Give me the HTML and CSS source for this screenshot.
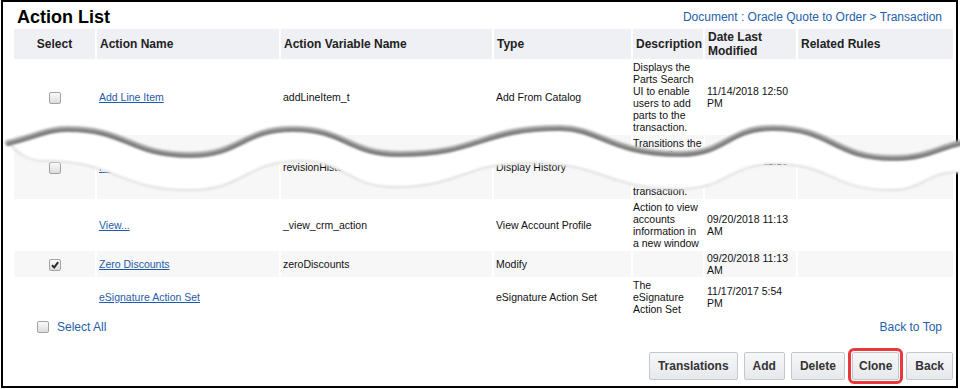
FILE: index.html
```html
<!DOCTYPE html>
<html lang="en">

<head>
    <meta charset="UTF-8">
    <meta name="viewport" content="width=device-width, initial-scale=1.0">
    <title>Action List</title>

    <link rel="stylesheet" href="styles.css">
</head>

<body>
    <div class="frame">
        <div class="titlebar">
            <h1>Action List</h1>
            <div class="crumbs">Document : Oracle Quote to Order &gt; Transaction</div>
        </div>

        <table class="action-table">
            <colgroup>
                <col class="c-sel">
                <col class="c-name">
                <col class="c-var">
                <col class="c-type">
                <col class="c-desc">
                <col class="c-date">
                <col class="c-rules">
            </colgroup>
            <thead>
                <tr>
                    <th class="sel">Select</th>
                    <th>Action Name</th>
                    <th>Action Variable Name</th>
                    <th>Type</th>
                    <th>Description</th>
                    <th>Date Last Modified</th>
                    <th>Related Rules</th>
                </tr>
            </thead>
            <tbody>
                <tr>
                    <td class="sel"><span class="chk"></span></td>
                    <td><a href="#">Add Line Item</a></td>
                    <td>addLineItem_t</td>
                    <td>Add From Catalog</td>
                    <td class="desc">Displays the Parts Search UI to enable users to add parts to the transaction.</td>
                    <td>11/14/2018 12:50 PM</td>
                    <td></td>
                </tr>
                <tr class="alt">
                    <td class="sel"><span class="chk"></span></td>
                    <td><a href="#">Revision History</a></td>
                    <td>revisionHistory_t</td>
                    <td>Display History</td>
                    <td class="desc">Transitions the transaction to the revision history transaction.</td>
                    <td>09/20/2018 11:13 AM</td>
                    <td></td>
                </tr>
                <tr>
                    <td class="sel"></td>
                    <td><a href="#">View...</a></td>
                    <td>_view_crm_action</td>
                    <td>View Account Profile</td>
                    <td class="desc">Action to view accounts information in a new window</td>
                    <td>09/20/2018 11:13 AM</td>
                    <td></td>
                </tr>
                <tr class="alt short">
                    <td class="sel">
                        <span class="chk">
                            <svg viewBox="0 0 10 10" width="10" height="10"><path d="M2 5.2 L4.2 7.4 L8.2 2.2" /></svg>
                        </span>
                    </td>
                    <td><a href="#">Zero Discounts</a></td>
                    <td>zeroDiscounts</td>
                    <td>Modify</td>
                    <td class="desc"></td>
                    <td>09/20/2018 11:13 AM</td>
                    <td></td>
                </tr>
                <tr>
                    <td class="sel"></td>
                    <td><a href="#">eSignature Action Set</a></td>
                    <td></td>
                    <td>eSignature Action Set</td>
                    <td class="desc">The eSignature Action Set</td>
                    <td>11/17/2017 5:54 PM</td>
                    <td></td>
                </tr>
            </tbody>
        </table>

        <div class="table-foot">
            <label class="select-all"><span class="chk"></span>Select All</label>
            <a class="top-link" href="#">Back to Top</a>
        </div>

        <div class="buttons">
            <button>Translations</button>
            <button>Add</button>
            <button>Delete</button>
            <button class="marked">Clone</button>
            <button>Back</button>
        </div>

        <!-- torn-page cut over the middle of the list -->
        <svg class="tear" viewBox="0 118 960 84" width="960" height="84">
            <defs>
                <filter id="soft" x="-5%" y="-60%" width="110%" height="220%">
                    <feGaussianBlur stdDeviation="1.1" />
                </filter>
            </defs>
            <path class="gap" d="M8,142 C37,135 47,128 67,128 C128,128 129,154 190,154 C241,154 242,128 293,128 C346,128 347,153 400,153 C480,153 480,127 560,127 C600,127 610,153 680,153 C727,153 727,127 773,127 C833,127 833,157 893,157 C926,157 935,148 960,142 L960,172 C925,172 925,190 890,190 C832,190 832,164 775,164 C728,164 728,189 680,189 C605,189 605,163 530,163 C462,163 462,187 395,187 C347,187 347,161 300,161 C245,161 245,190 190,190 C117,190 117,161 45,161 C25,161 15,150 8,142 Z" />
            <path class="edge-low" d="M8,142 C15,150 25,161 45,161 C117,161 117,190 190,190 C245,190 245,161 300,161 C347,161 347,187 395,187 C462,187 462,163 530,163 C605,163 605,189 680,189 C728,189 728,164 775,164 C832,164 832,190 890,190 C925,190 925,172 960,172" />
            <path class="edge-wide" d="M8,142 C37,135 47,128 67,128 C128,128 129,154 190,154 C241,154 242,128 293,128 C346,128 347,153 400,153 C480,153 480,127 560,127 C600,127 610,153 680,153 C727,153 727,127 773,127 C833,127 833,157 893,157 C926,157 935,148 960,142" />
            <path class="edge-core" d="M8,142 C37,135 47,128 67,128 C128,128 129,154 190,154 C241,154 242,128 293,128 C346,128 347,153 400,153 C480,153 480,127 560,127 C600,127 610,153 680,153 C727,153 727,127 773,127 C833,127 833,157 893,157 C926,157 935,148 960,142" />
        </svg>
    </div>
</body>

</html>
```

FILE: styles.css
```css
* {
    margin: 0;
    padding: 0;
    box-sizing: border-box;
}

body {
    background: #fff;
    font-family: "Liberation Sans", Arial, sans-serif;
    color: #111;
}

.frame {
    position: relative;
    width: 957px;
    height: 388px;
    margin-left: 1px;
    border: 2px solid #000;
    padding: 0 3px 0 11px;
}

.titlebar {
    display: flex;
    justify-content: space-between;
    align-items: flex-start;
    height: 27px;
}

.titlebar h1 {
    font-size: 18px;
    line-height: 22px;
    font-weight: bold;
    color: #000;
    padding: 4px 0 0 3px;
}

.crumbs {
    font-size: 12px;
    line-height: 14px;
    color: #2461ab;
    padding: 8px 11px 0 0;
}

/* list table */
.action-table {
    border-collapse: separate;
    border-spacing: 2px 0;
    table-layout: fixed;
    width: 943px;
    margin-left: -2px;
    font-size: 10.5px;
    line-height: 12px;
}

.c-sel { width: 81px; }
.c-name { width: 182px; }
.c-var { width: 211px; }
.c-type { width: 137px; }
.c-desc { width: 70px; }
.c-date { width: 91px; }
.c-rules { width: 155px; }

.action-table th {
    background: #eff0f4;
    color: #222;
    font-size: 12px;
    line-height: 14px;
    font-weight: bold;
    text-align: left;
    vertical-align: middle;
    padding: 1px 0 1px 3px;
    height: 30px;
}

.action-table th.sel {
    text-align: center;
    padding-left: 0;
}

.action-table td {
    padding: 2px 2px;
    vertical-align: middle;
    color: #111;
}

.action-table td.sel {
    text-align: center;
    padding: 0;
}

.action-table td.desc {
    padding-left: 0;
    padding-right: 0;
}

.action-table tr.alt td {
    background: #f7f7f7;
}

.action-table tr.short td {
    padding-top: 1px;
    padding-bottom: 1px;
}

.action-table a {
    color: #1f5ca8;
    text-decoration: underline;
}

/* fake checkboxes */
.chk {
    display: inline-block;
    width: 12px;
    height: 12px;
    border: 1px solid #a2a2a2;
    border-radius: 2px;
    background: linear-gradient(#fbfbfb, #dcdcdc);
    vertical-align: middle;
}

.chk svg {
    display: block;
}

.chk path {
    fill: none;
    stroke: #2b2b2b;
    stroke-width: 2;
}

.table-foot {
    display: flex;
    justify-content: space-between;
    align-items: center;
    height: 16px;
    margin-top: 2px;
    padding: 0 11px 0 23px;
    font-size: 12px;
    line-height: 16px;
}

.select-all {
    display: flex;
    align-items: center;
    gap: 8px;
    color: #2461ab;
}

.top-link {
    color: #2461ab;
    text-decoration: none;
}

.buttons {
    display: flex;
    justify-content: flex-end;
    gap: 6px;
    margin-top: 17px;
}

.buttons button {
    height: 28px;
    padding: 0 8px;
    font-family: "Liberation Sans", Arial, sans-serif;
    font-size: 12px;
    font-weight: bold;
    color: #333;
    background: linear-gradient(#f6f7f9, #e6e9ec);
    border: 1px solid #c3c8ce;
    border-radius: 2px;
}

.buttons button.marked {
    padding: 0 6px;
    outline: 3px solid #e8383d;
    outline-offset: 1px;
    margin: 0 1px;
}

/* torn edge */
.tear {
    position: absolute;
    left: -3px;
    top: 116px;
}

.tear .gap {
    fill: #fff;
}

.tear .edge-low {
    fill: none;
    stroke: #e0e0e0;
    stroke-width: 2;
    filter: url(#soft);
}

.tear .edge-wide {
    fill: none;
    stroke: #a8a8a8;
    stroke-width: 6;
    stroke-linecap: round;
    filter: url(#soft);
    transform: translateY(1px);
}

.tear .edge-core {
    fill: none;
    stroke: #6e6e6e;
    stroke-width: 2.2;
    stroke-linecap: round;
    filter: url(#soft);
    transform: translateY(2px);
}
```
